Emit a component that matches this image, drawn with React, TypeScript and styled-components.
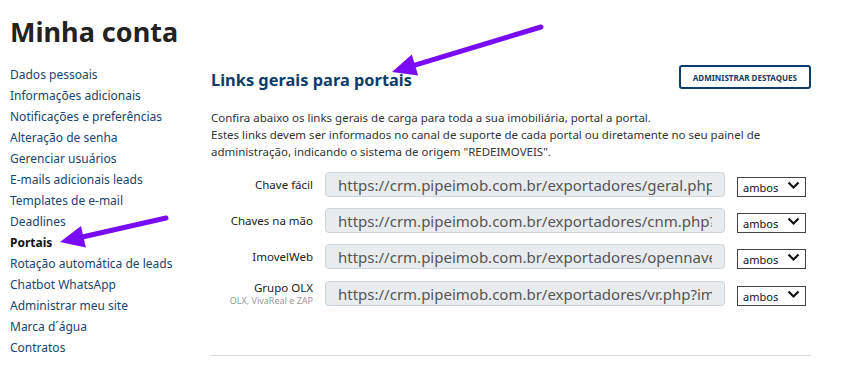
import styled, { createGlobalStyle } from "styled-components";

const GlobalStyle = createGlobalStyle`
  body {
    margin: 0;
    background: #fff;
    font-family: "Noto Sans", "Open Sans", Arial, sans-serif;
    color: #333;
  }
`;

const Page = styled.div`
  position: relative;
  width: 867px;
  height: 375px;
  overflow: hidden;
  padding: 0 10px;
  box-sizing: border-box;
`;

const PageTitle = styled.h1`
  margin: 12px 0 0;
  font-size: 27px;
  line-height: 40px;
  font-weight: 700;
  color: #222;
`;

const Columns = styled.div`
  display: flex;
`;

const Sidebar = styled.nav`
  width: 201px;
  display: flex;
  flex-direction: column;
  padding-top: 12px;
`;

const NavLink = styled.a<{ $active?: boolean }>`
  font-size: 12px;
  line-height: 21px;
  color: ${(p) => (p.$active ? "#111" : "#17456f")};
  font-weight: ${(p) => (p.$active ? 700 : 400)};
  text-decoration: none;
  white-space: nowrap;
`;

const Main = styled.main`
  width: 600px;
  padding-top: 7px;
`;

const HeaderRow = styled.div`
  display: flex;
  align-items: center;
  justify-content: space-between;
  height: 40px;
`;

const SectionTitle = styled.h2`
  margin: 0;
  font-size: 16.4px;
  font-weight: 700;
  color: #0c3c68;
`;

const OutlineButton = styled.button`
  height: 24px;
  padding: 0 12px;
  border: 2px solid #0d3d6b;
  border-radius: 3px;
  background: #fff;
  color: #0d3d6b;
  font-family: inherit;
  font-size: 8px;
  font-weight: 700;
  text-transform: uppercase;
  margin-top: -4px;
`;

const Intro = styled.p`
  margin: 10px 0 12px;
  font-size: 11.5px;
  line-height: 17px;
  color: #333;
`;

const LinkList = styled.div`
  display: flex;
  flex-direction: column;
  gap: 11px;
`;

const LinkRow = styled.div`
  display: grid;
  grid-template-columns: 102px 400px 82px;
  column-gap: 12px;
  align-items: center;
  min-height: 25px;
`;

const Label = styled.div`
  text-align: right;
  font-size: 11.5px;
  line-height: 15px;
  color: #222;
`;

const SubLabel = styled.div`
  font-size: 9px;
  line-height: 12px;
  color: #999;
  white-space: nowrap;
`;

const UrlInput = styled.input`
  box-sizing: border-box;
  width: 400px;
  height: 25px;
  padding: 0 12px;
  border: 1px solid #ced4da;
  border-radius: 4px;
  background: #e9ecef;
  color: #555;
  font-family: inherit;
  font-size: 15px;
`;

const SelectWrap = styled.div`
  position: relative;
  width: 69px;
  height: 20px;
`;

const Select = styled.select`
  appearance: none;
  box-sizing: border-box;
  width: 69px;
  height: 20px;
  padding: 0 0 0 5px;
  border: 1px solid #444;
  border-radius: 0;
  background: #fff;
  color: #111;
  font-family: inherit;
  font-size: 11px;
`;

const Chevron = styled.svg`
  position: absolute;
  right: 6px;
  top: 6px;
  pointer-events: none;
`;

const Divider = styled.hr`
  margin: 48px 0 0;
  border: none;
  border-top: 1px solid #ddd;
`;

const Annotation = styled.svg`
  position: absolute;
  left: 0;
  top: 0;
  pointer-events: none;
`;

const navItems = [
  "Dados pessoais",
  "Informações adicionais",
  "Notificações e preferências",
  "Alteração de senha",
  "Gerenciar usuários",
  "E-mails adicionais leads",
  "Templates de e-mail",
  "Deadlines",
  "Portais",
  "Rotação automática de leads",
  "Chatbot WhatsApp",
  "Administrar meu site",
  "Marca d´água",
  "Contratos",
];

const links = [
  { label: "Chave fácil", url: "https://crm.pipeimob.com.br/exportadores/geral.php?imob=1" },
  { label: "Chaves na mão", url: "https://crm.pipeimob.com.br/exportadores/cnm.php?imob=1" },
  { label: "ImovelWeb", url: "https://crm.pipeimob.com.br/exportadores/opennavent.php?imob=1" },
  { label: "Grupo OLX", sub: "OLX, VivaReal e ZAP", url: "https://crm.pipeimob.com.br/exportadores/vr.php?imob=1" },
];

function Arrow({ x1, y1, x2, y2 }: { x1: number; y1: number; x2: number; y2: number }) {
  const a = Math.atan2(y2 - y1, x2 - x1);
  const len = 24;
  const w = 11;
  const bx = x2 - Math.cos(a) * len;
  const by = y2 - Math.sin(a) * len;
  const px = -Math.sin(a) * w;
  const py = Math.cos(a) * w;
  return (
    <g>
      <line x1={x1} y1={y1} x2={bx} y2={by} stroke="#7a0cf5" strokeWidth={5} strokeLinecap="round" />
      <polygon points={`${x2},${y2} ${bx + px},${by + py} ${bx - px},${by - py}`} fill="#7a0cf5" />
    </g>
  );
}

export default function App() {
  return (
    <>
      <GlobalStyle />
      <Page>
        <PageTitle>Minha conta</PageTitle>
        <Columns>
          <Sidebar>
            {navItems.map((item) => (
              <NavLink key={item} href="#" $active={item === "Portais"}>
                {item}
              </NavLink>
            ))}
          </Sidebar>
          <Main>
            <HeaderRow>
              <SectionTitle>Links gerais para portais</SectionTitle>
              <OutlineButton>Administrar destaques</OutlineButton>
            </HeaderRow>
            <Intro>
              Confira abaixo os links gerais de carga para toda a sua imobiliária, portal a portal.
              <br />
              Estes links devem ser informados no canal de suporte de cada portal ou diretamente no seu painel de
              administração, indicando o sistema de origem "REDEIMOVEIS".
            </Intro>
            <LinkList>
              {links.map((l) => (
                <LinkRow key={l.label}>
                  <Label>
                    {l.label}
                    {l.sub && <SubLabel>{l.sub}</SubLabel>}
                  </Label>
                  <UrlInput readOnly value={l.url} />
                  <SelectWrap>
                    <Select defaultValue="ambos">
                      <option value="ambos">ambos</option>
                    </Select>
                    <Chevron width="13" height="9" viewBox="0 0 13 9">
                      <path d="M1.5 1.5 L6.5 6.5 L11.5 1.5" fill="none" stroke="#111" strokeWidth="2.2" />
                    </Chevron>
                  </SelectWrap>
                </LinkRow>
              ))}
            </LinkList>
            <Divider />
          </Main>
        </Columns>
        <Annotation width="867" height="375">
          <Arrow x1={541} y1={27} x2={392} y2={72} />
          <Arrow x1={166} y1={218} x2={60} y2={242} />
        </Annotation>
      </Page>
    </>
  );
}
